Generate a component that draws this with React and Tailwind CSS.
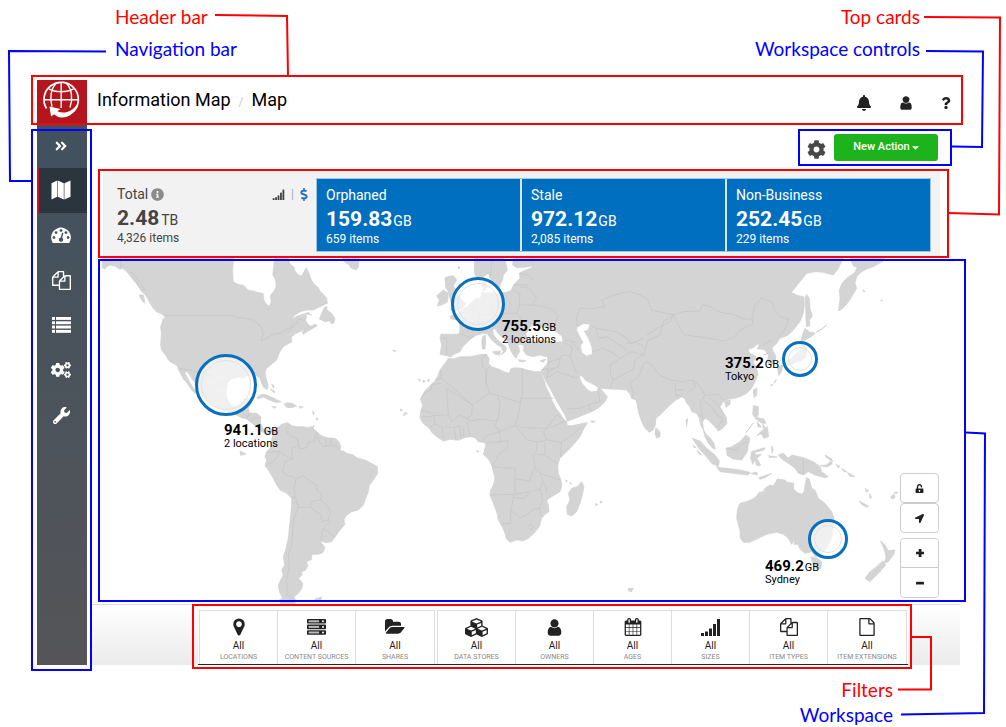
import React from "react";
import {
  FaBell, FaQuestion, FaCog, FaCogs, FaWrench, FaAngleDoubleRight, FaInfoCircle,
  FaDollarSign, FaUnlockAlt, FaLocationArrow,
} from "react-icons/fa";

const Glyph = ({ d, box = "0 0 1792 1792", className, children }) => (
  <svg viewBox={box} className={className} fill="currentColor" aria-hidden="true">
    {d ? <path d={d} /> : children}
  </svg>
);

const FILES =
  "M1696 384q40 0 68 28t28 68v1216q0 40-28 68t-68 28h-960q-40 0-68-28t-28-68v-288h-544q-40 0-68-28t-28-68v-672q0-40 20-88t48-76l408-408q28-28 76-48t88-20h416q40 0 68 28t28 68v328q68-40 128-40h416zm-544 213l-299 299h299v-299zm-640-384l-299 299h299v-299zm196 647l316-316v-416h-384v416q0 40-28 68t-68 28h-416v640h512v-256q0-40 20-88t48-76zm956 804v-1152h-384v416q0 40-28 68t-68 28h-416v640h896z";
const USER =
  "M1536 1399q0 109-62.5 187t-150.5 78h-854q-88 0-150.5-78t-62.5-187q0-85 8.5-160.5t31.5-152 58.5-131 94-89 134.5-34.5q131 128 313 128t313-128q76 0 134.5 34.5t94 89 58.5 131 31.5 152 8.5 160.5zm-256-887q0 159-112.5 271.5t-271.5 112.5-271.5-112.5-112.5-271.5 112.5-271.5 271.5-112.5 271.5 112.5 112.5 271.5z";
const FILE =
  "M1596 380q28 28 48 76t20 88v1152q0 40-28 68t-68 28h-1344q-40 0-68-28t-28-68v-1600q0-40 28-68t68-28h896q40 0 88 20t76 48zm-444-244v376h376q-10-29-22-41l-313-313q-12-12-41-22zm384 1528v-1024h-416q-40 0-68-28t-28-68v-416h-768v1536h1280z";
const CALENDAR =
  "M192 1664h288v-288h-288v288zm352 0h320v-288h-320v288zm-352-352h288v-320h-288v320zm352 0h320v-320h-320v320zm-352-384h288v-288h-288v288zm736 736h320v-288h-320v288zm-384-736h320v-288h-320v288zm768 736h288v-288h-288v288zm-384-352h320v-320h-320v320zm-352-864v-288q0-13-9.5-22.5t-22.5-9.5h-64q-13 0-22.5 9.5t-9.5 22.5v288q0 13 9.5 22.5t22.5 9.5h64q13 0 22.5-9.5t9.5-22.5zm736 864h288v-320h-288v320zm-384-384h320v-288h-320v288zm384 0h288v-288h-288v288zm32-480v-288q0-13-9.5-22.5t-22.5-9.5h-64q-13 0-22.5 9.5t-9.5 22.5v288q0 13 9.5 22.5t22.5 9.5h64q13 0 22.5-9.5t9.5-22.5zm384-64v1280q0 52-38 90t-90 38h-1408q-52 0-90-38t-38-90v-1280q0-52 38-90t90-38h128v-96q0-66 47-113t113-47h64q66 0 113 47t47 113v96h384v-96q0-66 47-113t113-47h64q66 0 113 47t47 113v96h128q52 0 90 38t38 90z";
const GAUGE =
  "M384 1152q0-53-37.5-90.5t-90.5-37.5-90.5 37.5-37.5 90.5 37.5 90.5 90.5 37.5 90.5-37.5 37.5-90.5zm192-448q0-53-37.5-90.5t-90.5-37.5-90.5 37.5-37.5 90.5 37.5 90.5 90.5 37.5 90.5-37.5 37.5-90.5zm428 481l101-382q6-26-7.5-48.5t-38.5-29.5-48 6.5-30 39.5l-101 382q-60 5-107 43.5t-63 98.5q-20 77 20 146t117 89 146-20 89-117q16-60-6-117t-72-91zm660-33q0-53-37.5-90.5t-90.5-37.5-90.5 37.5-37.5 90.5 37.5 90.5 90.5 37.5 90.5-37.5 37.5-90.5zm-640-640q0-53-37.5-90.5t-90.5-37.5-90.5 37.5-37.5 90.5 37.5 90.5 90.5 37.5 90.5-37.5 37.5-90.5zm448 192q0-53-37.5-90.5t-90.5-37.5-90.5 37.5-37.5 90.5 37.5 90.5 90.5 37.5 90.5-37.5 37.5-90.5zm320 448q0 261-141 483-19 29-54 29h-1402q-35 0-54-29-141-221-141-483 0-182 71-348t191-286 286-191 348-71 348 71 286 191 191 286 71 348z";
const CUBES =
  "M576 1700l384-192v-314l-384 164v342zm-64-454l404-173-404-173-404 173zm1088 454l384-192v-314l-384 164v342zm-64-454l404-173-404-173-404 173zm-448-293l384-165v-266l-384 164v267zm-64-379l441-189-441-189-441 189zm1088 518v416q0 36-19 67t-52 47l-448 224q-25 14-57 14t-57-14l-448-224q-4-2-7-4-2 2-7 4l-448 224q-25 14-57 14t-57-14l-448-224q-33-16-52-47t-19-67v-416q0-38 21.5-70t56.5-48l434-186v-400q0-38 21.5-70t56.5-48l448-192q23-10 50-10t50 10l448 192q35 16 56.5 48t21.5 70v400l434 186q36 16 57 48t21 70z";
const MARKER =
  "M1152 640q0-106-75-181t-181-75-181 75-75 181 75 181 181 75 181-75 75-181zm256 0q0 109-33 179l-364 774q-16 33-47.5 52t-67.5 19-67.5-19-46.5-52l-365-774q-33-70-33-179 0-212 150-362t362-150 362 150 150 362z";
const FOLDER =
  "M1879 952q0 31-31 66l-336 396q-43 51-120.5 86.5t-143.5 35.5h-1088q-34 0-60.5-13t-26.5-43q0-31 31-66l336-396q43-51 120.5-86.5t143.5-35.5h1088q34 0 60.5 13t26.5 43zm-343-344v160h-832q-94 0-197 47.5t-164 119.5l-337 396-5 6q0-4-.5-12.5t-.5-12.5v-960q0-92 66-158t158-66h320q92 0 158 66t66 158v32h544q92 0 158 66t66 158z";

const Signal = ({ className }) => (
  <Glyph box="0 0 19 18" className={className}>
    <rect x="0" y="15" width="3" height="3" />
    <rect x="4" y="13.5" width="3" height="4.5" />
    <rect x="8" y="10.5" width="3" height="7.5" />
    <rect x="12" y="6" width="3" height="12" />
    <rect x="16" y="1" width="3" height="17" />
  </Glyph>
);

const FoldedMap = ({ className }) => (
  <Glyph box="0 0 20 20" className={className}>
    <path d="M.5 3.2 6.2.6v16.2L.5 19.6zM6.800.6l6 2.6v16.2l-6-2.600zM13.400 3.2 19.5.6v16.2l-6.100 2.8z" />
  </Glyph>
);

const ListRows = ({ className }) => (
  <Glyph box="0 0 19 16" className={className}>
    {[0, 4.3, 8.6, 12.9].map((y) => (
      <React.Fragment key={y}>
        <rect x="0" y={y} width="3" height="2.9" />
        <rect x="4" y={y} width="15" height="2.9" />
      </React.Fragment>
    ))}
  </Glyph>
);

const Servers = ({ className }) => (
  <Glyph box="0 0 19 16" className={className}>
    {[0, 5.6, 11.2].map((y) => (
      <React.Fragment key={y}>
        <rect x="0" y={y} width="19" height="4.6" rx=".8" />
        <rect x="1.6" y={y + 1.3} width="10.5" height="2" fill="#bbb" />
        <circle cx="16" cy={y + 2.3} r="1" fill="#fff" />
      </React.Fragment>
    ))}
  </Glyph>
);

const GlobeLogo = () => (
  <svg viewBox="0 0 50 45" className="h-[45px] w-[50px]" fill="none" stroke="#fff" aria-hidden="true">
    <path d="M9.500 28.500A17.200 17.200 0 1 1 36 32" strokeWidth="1.700" />
    <path d="M7 19.700H41.500M12 8.800C18 12.500 30 12.500 36.500 8.800M24.200 2.500V28M19 3.500C14 8.500 12.500 18 15 26.500M29.500 3.500C35 9 36 19 33 27.500" strokeWidth="1.400" />
    <path d="M12.500 26.500 23.500 29 20.300 31.200C27 34.500 35.500 32 40.500 23.500 40 32 32 37.800 24.500 37.500 21.500 37.300 19 36 17.300 34.200L14 36.500Z" fill="#fff" stroke="none" />
  </svg>
);

const Frame = ({ className }) => (
  <div className={`pointer-events-none absolute z-10 border-2 ${className}`} aria-hidden="true" />
);

const navItems = [
  { label: "Map", icon: <FoldedMap className="size-5" />, active: true },
  { label: "Dashboard", icon: <Glyph d={GAUGE} box="0 200 1792 1450" className="h-4 w-5" /> },
  { label: "Items", icon: <Glyph d={FILES} className="size-[19px]" /> },
  { label: "List", icon: <ListRows className="h-4 w-[19px]" /> },
  { label: "Administration", icon: <FaCogs className="size-5" /> },
  { label: "Tools", icon: <FaWrench className="size-[17px]" /> },
];

const cards = [
  { title: "Orphaned", size: "159.83", items: "659 items" },
  { title: "Stale", size: "972.12", items: "2,085 items" },
  { title: "Non-Business", size: "252.45", items: "229 items" },
];

const filterGroups = [
  [
    { label: "Locations", icon: <Glyph d={MARKER} className="size-5" /> },
    { label: "Content Sources", icon: <Servers className="h-4 w-[19px]" /> },
    { label: "Shares", icon: <Glyph d={FOLDER} box="0 0 1920 1792" className="size-5" /> },
  ],
  [
    { label: "Data Stores", icon: <Glyph d={CUBES} box="-64 60 2176 1800" className="h-[19px] w-[23px]" /> },
    { label: "Owners", icon: <Glyph d={USER} className="size-[19px]" /> },
    { label: "Ages", icon: <Glyph d={CALENDAR} className="size-[18px]" /> },
    { label: "Sizes", icon: <Signal className="h-[18px] w-[19px]" /> },
    { label: "Item Types", icon: <Glyph d={FILES} className="size-[18px]" /> },
    { label: "Item Extensions", icon: <Glyph d={FILE} className="size-[18px]" /> },
  ],
];

const markers = [
  { size: "941.1", place: "2 locations", ring: "left-[97px] top-[96px] size-[62px]", text: "left-[126px] top-[166px]" },
  { size: "755.5", place: "2 locations", ring: "left-[353px] top-[19px] size-[54px]", text: "left-[404px] top-[62px]" },
  { size: "375.2", place: "Tokyo", ring: "left-[684px] top-[83px] size-[36px]", text: "left-[627px] top-[99px]" },
  { size: "469.2", place: "Sydney", ring: "left-[710px] top-[261px] size-[40px]", text: "left-[667px] top-[302px]" },
];

const americas = [
  "M37 9V38L45 42 50 35 62 30 75 33 88 42 98 40 112 52 120 62 128 72 138 85 148 98 155 110 165 118 172 130 180 145 190 160 200 170 212 178 220 187 217 200 212 215 214 235 213 255 212 272 215 285 222 295 228 302 235 315 243 322 255 328 263 335 266 345 275 362 280 372 290 382 295 390 305 405 318 418 317 408 306 393 298 380 292 368 284 352 290 350 298 358 305 370 316 385 330 410 345 430 360 445 380 455 400 465 420 470 440 480 455 488 470 492 485 503 495 512 505 520 515 530 530 537 545 531 556 537 560 524 545 523 527 525 518 520 512 505 512 485 500 475 478 474 475 460 485 445 485 430 462 432 455 445 440 455 425 452 415 440 408 420 410 400 413 382 425 372 445 366 460 370 470 363 485 360 500 362 510 370 515 385 522 398 530 404 534 400 534 390 528 370 525 352 530 340 545 328 560 315 565 300 570 290 580 275 592 268 606 260 603 248 615 236 630 230 645 222 637 232 640 238 655 228 665 222 682 212 675 208 662 214 652 205 646 195 650 184 640 178 622 183 606 192 612 182 630 170 650 165 670 165 690 155 705 148 712 145 710 130 700 118 690 108 685 98 670 85 662 70 655 50 648 38 642 50 636 62 625 60 615 48 612 35 600 28 595 9Z",
  "M688 192 695 175 705 155 712 157 710 165 725 175 735 190 732 203 725 207 718 197 705 200Z",
  "M500 428 515 418 530 420 545 427 560 434 574 440 560 443 540 436 520 426 505 431Z",
  "M582 448 590 443 605 445 620 453 605 458 590 457Z M546 454 560 456 552 460Z M627 454 640 456 630 460Z",
  "M757 9 765 22 778 30 782 38 798 45 805 38 808 9Z",
  "M147 120 160 120 165 145 158 140Z M640 178 655 172 665 180 655 178Z M450 588 468 597 452 601Z",
  "M545 388 552 392 550 400Z M540 402 556 410 552 413Z M668 468 673 475 670 480Z M678 488 685 492 680 496Z",
  "M560 520 575 508 592 503 598 506 605 512 620 515 640 515 655 518 672 512 670 520 680 530 690 540 710 548 735 550 745 558 752 572 750 588 760 588 770 595 790 600 800 608 825 615 850 628 862 635 863 655 850 675 838 690 835 710 825 735 820 750 805 765 785 770 768 782 762 795 765 808 750 825 738 842 725 860 705 863 692 855 695 865 705 878 698 893 685 898 666 898 664 914 648 920 654 932 646 946 635 950 636 960 626 970 638 985 636 1000 625 1015 612 1025 618 1055 575 1055 568 1035 578 1030 568 1010 565 990 572 975 580 960 575 945 584 930 580 905 588 880 595 850 598 820 602 780 605 750 605 730 590 715 570 705 560 690 550 670 535 645 525 632 530 615 525 605 530 590 540 580 545 570 545 550 553 535Z",
  "M675 1032 695 1026 692 1038 678 1040Z",
];
const americasWater = [
  "M432 9 428 45 430 80 445 88 460 90 475 105 490 108 505 112 520 115 522 135 530 148 538 153 543 140 540 122 550 110 558 95 556 75 548 60 550 40 553 9Z",
  "M205 172 222 182 225 194 219 190 208 180Z",
];
const americasBorders =
  "M225 181H427L440 187 470 190 490 196 505 207 515 220 520 235 513 256 530 250 550 238 572 235 590 222 600 220 612 208 622 205 625 192M625 192 645 196M92 9V42M120 50 135 60 142 75 150 82 160 100 168 118M126 64 138 78 150 100M592 232 605 222 608 208M265 340 300 345 316 350 345 355 370 365 385 385 400 390 410 398M478 474 470 492M512 487 495 490 482 503M600 508 588 520 592 535 605 545 622 550 630 582 650 578 655 562 672 560 680 530M680 530 688 560 700 575 718 572 735 570M708 548V574M722 550V572M735 570 750 588M622 550 625 572 605 580 608 612 585 620 578 650 592 662 610 665 618 672 612 700 616 725 606 728M530 592 545 592 568 588 590 605 608 612M568 588 562 605 548 622 532 628M618 672 640 662 660 680 680 690 680 706 695 715 692 735 668 738 660 757 625 757 616 725M692 735 715 755 722 775 715 795 696 800 693 780 660 757M722 795 700 820 692 855M700 820 725 838 735 848M625 757 612 790 608 830 605 870 595 900 597 940 590 975 592 1020 618 1035";

const oldWorld = [
  // Africa
  "M205 310 195 325 180 345 172 365 165 378 150 392 135 408 125 425 122 435 128 450 122 470 120 485 125 500 135 510 148 520 155 532 170 545 190 558 210 553 235 556 255 548 270 545 285 548 295 560 310 562 318 567 315 580 310 598 325 612 335 630 340 650 345 670 340 690 332 705 330 720 340 745 350 770 355 795 368 818 375 835 380 852 390 862 410 855 430 857 445 850 462 835 478 815 485 790 495 778 507 770 505 750 500 735 515 725 540 710 545 695 543 675 535 655 533 630 540 610 560 590 580 570 600 545 612 520 622 503 600 507 575 512 562 512 560 500 548 488 540 475 528 460 518 440 510 420 498 395 490 370 482 350 465 350 440 345 425 340 405 338 392 342 388 355 372 350 355 342 335 335 325 325 328 312 320 298 305 298 270 305 240 305 220 312Z",
  "M605 680 612 695 608 715 600 745 590 770 575 783 562 778 560 755 570 735 565 715 575 700 592 695Z",
  // Europe and Asia
  "M482 350 490 362 497 378 510 400 525 428 540 455 555 480 562 498 580 492 610 480 640 468 660 455 675 440 682 425 665 405 655 395 652 408 635 411 622 404 605 384 597 362 605 362 618 377 640 388 660 400 690 402 720 403 740 405 750 418 755 430 768 435 772 450 775 470 785 500 795 520 808 532 820 525 826 510 828 490 840 480 855 465 870 450 885 437 905 425 915 432 920 445 930 455 935 470 950 475 958 490 962 510 970 525 975 545 985 565 998 580 1006 583 1002 565 990 548 977 537 970 522 968 500 975 490 985 495 995 505 1005 515 1015 528 1028 520 1041 505 1038 485 1028 470 1020 455 1030 440 1045 432 1065 430 1080 425 1100 415 1115 400 1125 380 1134 360 1130 340 1120 322 1128 305 1108 293 1104 283 1122 277 1132 268 1138 268 1132 282 1142 282 1155 285 1165 300 1162 320 1170 330 1185 322 1188 305 1180 290 1176 278 1190 265 1200 250 1225 240 1240 225 1260 200 1270 175 1273 150 1271 125 1255 122 1232 112 1240 105 1260 80 1280 55 1305 50 1330 52 1360 60 1375 40 1390 9 458 9 455 38 430 48 418 55 420 70 405 85 398 95 395 105 380 112 350 115 330 112 315 115 305 112 302 130 285 132 272 145 262 155 245 165 232 175 210 184 213 192 235 195 240 215 238 237 215 238 183 237 180 250 185 270 180 298 200 302 212 306 222 298 240 290 248 275 262 262 275 250 290 240 310 235 322 236 335 254 350 268 363 275 370 290 362 300 376 290 380 278 365 265 350 252 340 238 338 225 345 220 352 232 362 242 378 255 385 265 390 282 400 300 408 310 412 300 418 292 418 280 412 270 425 268 432 275 430 287 440 300 460 305 480 300 503 306 503 325Z",
  "M283 9V55L290 68 302 70 315 62 325 55 330 68 338 85 345 100 358 100 362 85 368 75 370 60 382 46 378 25 372 9Z M400 9 398 30 410 38 440 36 458 32V9Z",
  "M305 85 318 75 320 90 318 105 310 108Z",
  "M195 68 215 62 222 64 230 75 220 92 228 105 238 122 245 135 258 146 245 162 225 168 212 165 215 150 210 130 205 110 197 95Z M170 122 190 105 205 115 203 140 185 150 172 152 178 135Z",
  "M308 245 316 240 317 258 315 282 307 282 305 260Z M338 290 362 288 358 301 342 296Z M415 314 437 317 430 321 418 319Z M480 318 498 312 490 322Z",
  "M114 372 122 375 118 378Z M128 376 136 378 130 382Z M142 376 148 372 146 380Z M60 462 68 466 62 468Z M74 472 82 475 70 482Z M38 286 48 288 44 290Z M290 586 297 590 292 592Z M632 498 646 499 636 503Z M745 1000 760 1000 755 1010 746 1008Z M556 674 562 678 560 682Z M568 682 575 686 572 688Z M646 746 653 748 648 752Z M660 738 667 740 662 745Z M234 34 240 38 236 42Z",
];
const oldWorldWater = [
  "M438 238 450 215 465 205 478 216 500 218 520 225 545 243 548 260 520 262 490 255 460 260 445 258Z",
  "M592 217 610 206 630 208 624 225 612 228 625 250 635 275 637 297 620 303 605 292 602 270 610 262 598 242 590 225Z",
];
const oldWorldBorders =
  "M182 345 185 370 215 395 277 450 320 420 330 415M185 370 172 372M185 385 155 388 153 405 135 412 122 432M200 400 205 480 160 482 150 472 125 465M200 400 277 450M330 415 318 385 318 345 308 335 305 310 320 298M318 385 320 345 330 335M330 415 350 420 422 443V430H520M427 340V428M422 443 412 490 405 512 425 535 440 555 470 560M352 418 360 450 355 490 345 510 358 530M277 450 275 480 260 490 270 498 310 492 345 498 358 490M205 480 215 500 240 480 260 490M160 482 165 508 150 515M125 485 155 485M165 508 185 515 192 552M192 515 222 518 228 555M222 518 240 512 242 550M252 512 250 545M262 500 270 545M358 530 315 545 308 560M358 530 362 560 345 562 318 565M362 560 385 558 382 580 355 600 345 620 335 632M405 512 370 525 358 530M412 510 425 518 500 520 490 530 500 555 470 562 470 590 460 600 465 640 455 655 450 680 432 675 405 672 405 640 388 638 380 640 340 635M500 520 515 500 530 480 550 490M500 520 520 515 550 500 560 502M500 555 545 562 570 545 605 515M545 562 542 605M495 565 495 600 535 628M470 598 495 600M465 640 482 655 540 675M482 655 488 680 480 702 455 710 420 715 400 718 330 720M405 672 405 718M400 718 400 730 392 765V805L365 808M392 765 420 790 440 780 460 762 478 760 485 785M455 710 430 730 400 728M480 702 488 735 478 760M488 680 500 700 498 715M443 815 452 807 460 815 452 825 445 822M500 325 540 310 545 300 570 302 575 290M540 310 535 335 505 350 500 370 530 350 560 360 585 368 597 365M535 335 500 345M560 462 600 460 625 450 635 468M625 450 660 440 655 410M570 302 590 355M548 260 575 275 575 290M555 255 590 262M575 262 598 285M637 290 670 280 700 295 720 310 690 330 692 360 700 375 690 402M700 375 735 355 760 345 765 315 790 300 800 305M720 310 755 290 790 300M755 430 760 410 750 385 775 365 790 330 800 320 820 335 838 360M592 215 590 185 600 160 640 160 675 155 665 135 690 125 720 115 750 110 780 120 800 130 815 165 880 180 850 200 840 240 805 255 790 300M630 210 650 220 680 225 710 230 740 250 755 265 790 250M740 265 770 262 790 275M650 220 655 250 680 245 710 265 740 285M880 180 910 170 960 168 966 150 985 152 1020 172 1060 178 1090 192 1118 192 1118 208 1085 222 1060 248 1030 258 990 250 950 245 910 238 890 200 880 180M1115 192 1125 150 1145 130 1175 140 1185 165 1205 188 1225 192 1215 225 1200 240M880 180 870 200 840 215 800 240M838 360 870 375 905 380 940 375 945 395 930 410M945 378 960 395 975 420 990 420 1015 418 1030 435M975 420 960 445 968 490M975 440 1000 460 1010 480 1030 490 1015 515M985 425 1010 445 1030 475M885 385 888 420 905 425M890 405 912 405M1150 300 1165 295M1148 270 1175 255M395 105 420 115 418 150 410 175 380 175 365 180M420 95 450 100 470 130 455 150 418 150M455 150 490 155 520 165 535 185 520 215M410 175 430 200 455 205M418 55 445 60 460 75M400 90 445 90M365 180 350 190 375 200 410 205M185 250 200 250 200 300M240 235 275 250M275 145 285 170 300 180 295 200 300 235M285 170 260 160M305 180 340 175 350 190M340 175 335 140M330 70 335 30 340 9M375 255 410 250 430 258M483 345 505 340";

const pacific = [
  "M630 9 640 33 652 38 642 55 622 68 606 85 598 105 600 130 598 150 596 168 606 162 620 148 635 125 650 100 645 85 650 65 665 50 680 42 700 35 730 18 735 9Z",
  "M48 518 60 530 60 545 50 550 45 535Z",
  "M483 258 488 238 495 220 508 230 526 235 512 246 495 255Z M500 118 508 130 510 160 517 183 508 195 510 212 500 215 498 195 497 160 495 130Z M486 262 500 280 498 305 485 316 465 322 450 330 432 336 440 318 455 310 470 295 483 280Z M412 335 428 330 425 350 416 362Z",
  "M528 232 542 223 560 210 545 223Z M404 378 410 375 402 385Z M392 390 398 388 394 394Z M669 104 676 110 670 110Z M722 135 728 137 723 138Z",
  "M340 404 351 400 350 420 342 428Z M254 440 270 434 270 448 258 457Z",
  "M340 452 355 455 355 478 350 488 372 492 378 505 366 505 348 492 338 478Z M352 500 364 516 354 516Z M368 508 376 518 370 520Z M382 515 386 545 372 550 364 536 350 542 365 528Z M340 504 318 532 328 520Z",
  "M157 550 180 558 200 580 225 600 238 618 235 635 215 625 195 600 175 578Z",
  "M230 637 260 640 300 645 330 652 325 660 280 655 240 650Z M332 655 350 652 352 660Z M356 668 395 655 375 668 360 673Z",
  "M258 580 275 575 300 560 318 540 330 550 325 570 322 590 305 615 280 612 262 602Z",
  "M334 590 350 585 375 578 372 585 345 592 345 600 365 598 350 610 362 630 350 632 345 615 338 628 332 610Z M395 572 400 585 396 595Z M385 602 412 606 390 608Z M160 570 168 578 162 578Z M172 585 185 600 176 596Z M138 495 143 490 140 515Z",
  "M415 600 430 595 445 610 455 600 490 608 520 620 540 635 545 650 565 665 555 668 525 660 505 650 490 660 475 655 465 640 445 625 425 612Z",
  "M540 632 560 630 572 618 577 626 562 636Z M555 600 575 612 578 620 560 608Z M588 628 600 635 595 638Z M605 640 620 650 612 650Z M622 652 645 665 630 664Z M676 700 686 708 680 712Z M688 715 695 728 690 730Z M658 738 686 754 680 757 664 748Z M752 725 762 718 765 728 756 732Z M762 714 773 710 770 716Z",
  "M300 745 320 740 345 728 358 712 370 710 375 700 390 690 400 692 408 680 412 672 435 675 440 682 462 685 460 700 470 712 486 718 493 708 495 690 500 668 508 672 515 700 525 705 535 730 555 745 575 770 582 790 580 820 575 850 560 880 540 900 525 905 515 890 495 895 480 882 474 868 462 868 466 852 455 868 445 850 430 838 410 832 380 838 355 850 330 862 310 862 301 850 300 825 290 790 292 765Z",
  "M513 905 530 910 545 920 543 940 530 942 518 925Z",
  "M722 857 735 870 745 887 765 885 762 897 745 920 730 925 738 910 735 890Z M728 918 737 930 720 950 700 970 690 980 675 970 690 950 710 935Z",
];

const WorldMap = () => (
  <svg
    viewBox="98 258 862 346"
    preserveAspectRatio="xMinYMin slice"
    className="block h-[346px] w-full"
    role="img"
    aria-label="World map"
  >
    {[
      { at: "translate(90 255) scale(.33333)", land: americas, water: americasWater, lines: americasBorders },
      { at: "translate(380 255) scale(.33333)", land: oldWorld, water: oldWorldWater, lines: oldWorldBorders },
      { at: "translate(640 255) scale(.33333)", land: pacific, water: [], lines: "M490 610V660M262 580 290 585 305 568 325 560" },
    ].map((g) => (
      <g key={g.at} transform={g.at} strokeLinejoin="round">
        {g.land.map((d) => <path key={d} d={d} fill="#d4d4d4" stroke="#cfcfcf" strokeWidth="2" />)}
        {g.water.map((d) => <path key={d} d={d} fill="#fff" stroke="#cdcdcd" strokeWidth="1" />)}
        <path d={g.lines} fill="none" stroke="#c6c6c6" strokeWidth="2.500" />
      </g>
    ))}
  </svg>
);

const mapButton = "flex h-[30px] w-[39px] items-center justify-center rounded border border-[#ccc] bg-white text-[#222]";
const zoomButton = "flex h-[29px] w-[37px] items-center justify-center bg-white text-[#222]";

export default function App() {
  return (
    <div className="relative min-h-screen bg-white font-['Roboto',sans-serif] text-[#333]">
      <div className="pt-px pr-[86px] pb-[15px] pl-[115px] font-['Lato',sans-serif] text-[19px] leading-8">
        <div className="flex justify-between text-[#ff0000]">
          <span>Header bar</span>
          <span>Top cards</span>
        </div>
        <div className="flex justify-between text-[#0000ff]">
          <span>Navigation bar</span>
          <span>Workspace controls</span>
        </div>
      </div>

      <div className="mr-[46px] ml-[37px]">
        <header className="relative flex h-[45px] items-center">
          <Frame className="-top-[5px] -right-[3px] -left-[6px] h-[50px] border-[#ff0000]" />
          <a href="#home" aria-label="Home" className="bg-[#b4161d]"><GlobeLogo /></a>
          <nav className="flex items-baseline pb-[5px] pl-[10px] text-lg text-black" aria-label="Breadcrumb">
            <a href="#information-map">Information Map</a>
            <span className="px-2 text-xs text-[#ccc]">/</span>
            <span>Map</span>
          </nav>
          <div className="mr-[8px] ml-auto flex items-center gap-[26px] text-[#222]">
            <button type="button" aria-label="Notifications"><FaBell className="size-4" /></button>
            <button type="button" aria-label="Account"><Glyph d={USER} className="size-4" /></button>
            <button type="button" aria-label="Help"><FaQuestion className="h-3 w-3" /></button>
          </div>
        </header>

        <div className="flex">
          <aside className="relative w-[50px] shrink-0 bg-linear-to-b from-[#41515e] to-[#555558] text-white">
            <Frame className="top-1 -right-[5px] -bottom-[6px] -left-[6px] border-[#0000ff]" />
            <button type="button" aria-label="Expand" className="flex h-[43px] w-full items-center justify-center pr-[2px] pb-px">
              <FaAngleDoubleRight className="size-[14px]" />
            </button>
            {navItems.map((n) => (
              <a
                key={n.label}
                href={`#${n.label}`}
                aria-label={n.label}
                className={`flex h-[45px] items-center justify-center pb-px ${n.active ? "border-l-2 border-[#d0152b] bg-[#2b353e] pr-1" : "pr-[2px]"}`}
              >
                {n.icon}
              </a>
            ))}
          </aside>

          <main className="min-w-0 grow">
            <div className="relative mr-[8px] ml-auto flex h-[46px] w-[154px] items-start gap-2 pt-[9px] pl-[9px]">
              <Frame className="top-1 right-0 left-0 h-[37px] border-[#0000ff]" />
              <button type="button" aria-label="Settings" className="pt-[6px] text-[#484848]"><FaCog className="size-[19px]" /></button>
              <button type="button" className="flex h-[27px] w-[104px] items-center justify-center gap-[2px] rounded-[3px] bg-[#1db31d] text-[11px] font-medium text-white">
                New Action
                <Glyph box="0 0 8 4" className="h-1 w-[7px]"><path d="M0 0h8L4 4z" /></Glyph>
              </button>
            </div>

            <section className="relative mr-[20px] ml-[16px] flex h-[87px] bg-[#f2f2f2] pt-[7px] pr-[9px] pb-[6px]">
              <Frame className="-top-[2px] -right-[9px] bottom-0 -left-[5px] border-[#ff0000]" />
              <div className="flex w-[213px] shrink-0 justify-between pt-[6px] pr-2 pl-[14px]">
                <div className="text-[#444]">
                  <h2 className="flex items-center gap-[3px] text-sm leading-5">Total <FaInfoCircle className="size-[13px] text-[#8b8b8b]" /></h2>
                  <p className="text-[21px] leading-7 font-bold">2.48<span className="pl-[2px] text-sm font-normal">TB</span></p>
                  <p className="text-xs leading-3">4,326 items</p>
                </div>
                <div className="flex h-5 items-center gap-[6px] text-xs">
                  <button type="button" aria-label="Show sizes"><Signal className="h-[11px] w-[13px] text-[#444]" /></button>
                  <span className="text-[#aaa]">|</span>
                  <button type="button" aria-label="Show costs" className="text-[#2774c4]"><FaDollarSign className="h-[13px] w-2" /></button>
                </div>
              </div>
              <div className="grid grow grid-cols-3 gap-[2px] border border-[#9fc6e5] bg-[#d6e7f5]">
                {cards.map((c) => (
                  <article key={c.title} className="bg-[#006fc0] pt-[6px] pl-[9px] text-white">
                    <h2 className="text-sm leading-5">{c.title}</h2>
                    <p className="text-[21px] leading-7 font-bold">{c.size}<span className="pl-px text-sm font-normal">GB</span></p>
                    <p className="text-xs leading-3">{c.items}</p>
                  </article>
                ))}
              </div>
            </section>

            <section className="relative ml-[11px] h-[346px]">
              <WorldMap />
              <Frame className="top-px -right-[6px] bottom-[2px] left-0 border-[#0000ff]" />
              {markers.map((m) => (
                <React.Fragment key={m.size}>
                  <div className={`absolute rounded-full border-[3px] border-[#0770be] bg-white/65 p-[3px] ${m.ring}`}>
                    <div className="size-full rounded-full border border-[#e2e2e2]" />
                  </div>
                  <div className={`absolute text-[11px] leading-3 text-black ${m.text}`}>
                    <p><b className="text-[15px] font-bold">{m.size}</b><span className="pl-px">GB</span></p>
                    <p>{m.place}</p>
                  </div>
                </React.Fragment>
              ))}
              <div className="absolute top-[215px] right-[21px] flex flex-col">
                <button type="button" aria-label="Unlock" className={mapButton}><FaUnlockAlt className="size-[9px]" /></button>
                <button type="button" aria-label="Locate" className={mapButton}><FaLocationArrow className="size-[9px]" /></button>
                <div className="mt-[5px] divide-y divide-[#ccc] overflow-hidden rounded border border-[#ccc]">
                  <button type="button" aria-label="Zoom in" className={zoomButton}>
                    <Glyph box="0 0 8 8" className="size-2"><path d="M3 0h2.500v2.800H8v2.400H5.500V8H2.700V5.200H0V2.800h2.700V0z" /></Glyph>
                  </button>
                  <button type="button" aria-label="Zoom out" className={zoomButton}>
                    <Glyph box="0 0 8 8" className="size-2"><rect y="2.700" width="8" height="2.700" rx=".5" /></Glyph>
                  </button>
                </div>
              </div>
            </section>

            <section className="ml-[5px] flex h-[61px] justify-end border-t border-[#ddd] bg-linear-to-b from-white to-[#ebebeb] pr-[52px]">
              <div className="relative flex gap-[2px] border-b border-[#222] bg-white px-px pt-[5px]">
                <Frame className="-top-px -right-[4px] -bottom-[5px] -left-[6px] border-[#ff0000]" />
                {filterGroups.map((group, i) => (
                  <div key={i} className="flex divide-x divide-[#ddd] border border-b-0 border-[#ddd]">
                    {group.map((f) => (
                      <button type="button" key={f.label} className="flex w-[78px] flex-col items-center pt-[6px] text-[#222]">
                        <span className="flex h-5 items-center">{f.icon}</span>
                        <span className="pt-[2px] text-[10px] leading-[14px]">All</span>
                        <span className="text-[7px] leading-[9px] whitespace-nowrap text-[#888] uppercase">{f.label}</span>
                      </button>
                    ))}
                  </div>
                ))}
              </div>
            </section>
          </main>
        </div>
      </div>

      <div className="flex flex-col items-end pt-3 pr-[113px] font-['Lato',sans-serif] text-[19px] leading-[25px]">
        <span className="text-[#ff0000]">Filters</span>
        <span className="text-[#0000ff]">Workspace</span>
      </div>

      <svg viewBox="0 0 300 200" className="pointer-events-none absolute top-0 left-0 z-20 h-[200px] w-[300px]" fill="none" strokeWidth="2" aria-hidden="true">
        <path d="M215 15 287 16 288 76" stroke="#f00" />
        <path d="M106 51.500 9 51 10 181H32" stroke="#00f" />
      </svg>
      <svg viewBox="890 0 116 727" className="pointer-events-none absolute top-0 right-0 z-20 h-[727px] w-[116px]" fill="none" strokeWidth="2" aria-hidden="true">
        <path d="M924 17 1000 17.500 999 214.500 949 213M898 689.500H931V637H912" stroke="#f00" />
        <path d="M926 51 983 51.500 982 147 952 146.500M901 714.500 984 713 985 433.500 966 432.500" stroke="#00f" />
      </svg>
    </div>
  );
}
